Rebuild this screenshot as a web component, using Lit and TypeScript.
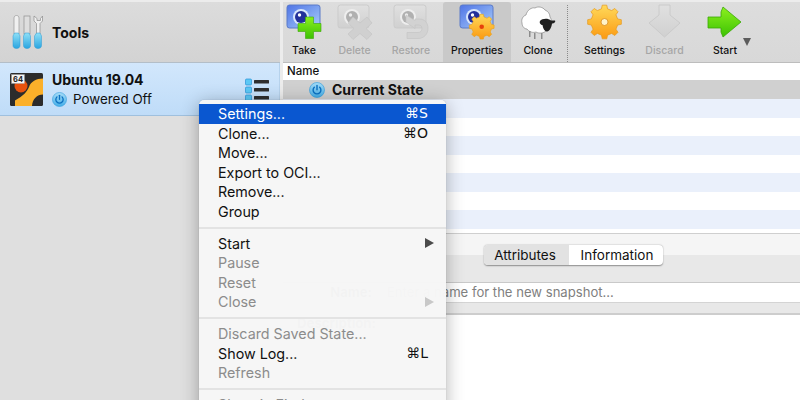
import { LitElement, html, css, svg } from "lit";
import { customElement } from "lit/decorators.js";

function gear(cx: number, cy: number, r: number, rb: number, teeth: number): string {
  const pts: string[] = [];
  const step = (Math.PI * 2) / teeth;
  for (let i = 0; i < teeth; i++) {
    const a = i * step - Math.PI / 2;
    const w = step * 0.17;
    const v = step * 0.29;
    const add = (ang: number, rad: number) =>
      pts.push(`${(cx + Math.cos(ang) * rad).toFixed(2)},${(cy + Math.sin(ang) * rad).toFixed(2)}`);
    add(a - v, rb);
    add(a - w, r);
    add(a + w, r);
    add(a + v, rb);
  }
  return "M" + pts.join("L") + "Z";
}

const defs = svg`
  <defs>
    <linearGradient id="blue" x1="0" y1="0" x2="1" y2="1"><stop offset="0" stop-color="#4f74e6"/><stop offset="1" stop-color="#a8cdfa"/></linearGradient>
    <linearGradient id="grey" x1="0" y1="0" x2="0" y2="1"><stop offset="0" stop-color="#e0e0e0"/><stop offset="1" stop-color="#d0d0d0"/></linearGradient>
    <linearGradient id="green" x1="0" y1="0" x2="0" y2="1"><stop offset="0" stop-color="#8cf01e"/><stop offset="1" stop-color="#3cc203"/></linearGradient>
    <linearGradient id="gold" x1="0" y1="0" x2="0" y2="1"><stop offset="0" stop-color="#ffd95a"/><stop offset="1" stop-color="#fb9a12"/></linearGradient>
    <linearGradient id="handle" x1="0" y1="0" x2="0" y2="1"><stop offset="0" stop-color="#8fe0f7"/><stop offset="1" stop-color="#2aa5e0"/></linearGradient>
    <linearGradient id="pow" x1="0" y1="0" x2="0" y2="1"><stop offset="0" stop-color="#a7dcf7"/><stop offset="1" stop-color="#43aee8"/></linearGradient>
  </defs>`;

const lens = (fill: string, ring: string, dot: string) => svg`
  <circle cx="15" cy="13" r="8" fill="${ring}"/>
  <circle cx="15" cy="13" r="6" fill="${fill}"/>
  <circle cx="13.500" cy="11" r="1.700" fill="${dot}"/>`;

const takeIcon = svg`
  <rect x="1" y="1" width="33" height="23" rx="2.500" fill="url(#blue)" stroke="#5a7ac8"/>
  ${lens("#22309a", "#d8e6fb", "#ffffff")}
  <path d="M19.500 13h8v6.500h7.500v8h-7.500v7h-8v-7h-7.500v-8h7.500z" fill="url(#green)" stroke="#3aa806" stroke-width=".6"/>`;

const deleteIcon = svg`
  <rect x="1" y="1" width="31" height="23" rx="2.500" fill="url(#grey)" stroke="#cbcbcb"/>
  ${lens("#b0b0b0", "#eeeeee", "#ececec")}
  <path d="M11 19l5-6 7 6 7-6 5 6-6 5.500 6 5.500-5 5.500-7-6-7 6-5-5.500 6-5.500z" fill="#d0d0d0" stroke="#c2c2c2" stroke-width=".6"/>`;

const restoreIcon = svg`
  <rect x="1" y="1" width="32" height="23" rx="2.500" fill="url(#grey)" stroke="#cbcbcb"/>
  ${lens("#b0b0b0", "#eeeeee", "#ececec")}
  <path d="M13 11l9 5.500v-1.500h4c6 0 9 4 9 9.500s-4 10-10 10H14v-6h11c2.500 0 4-1.500 4-4s-1.500-3.500-3.500-3.500H22v3.500l-9-6.500z" fill="#d2d2d2" stroke="#c2c2c2" stroke-width=".6"/>`;

const propsIcon = svg`
  <rect x="1" y="1" width="33" height="23" rx="2.500" fill="url(#blue)" stroke="#5a7ac8"/>
  ${lens("#22309a", "#d8e6fb", "#ffffff")}
  <path d="${gear(22.700, 22.700, 12.500, 10, 8)}" fill="url(#gold)" stroke="#e8a018" stroke-width=".6" stroke-linejoin="round"/>
  <circle cx="22.700" cy="22.700" r="2.300" fill="#e6400c"/>`;

const cloneIcon = svg`
  <path d="M6 11c-3 1-5 4-4 8 0 3 2 6 5 6 2 3 6 4 9 3 3 2 8 1 10-1 2 0 4-2 4-5 2-3 2-6 0-9 0-3-2-6-5-7-2-3-7-4-10-2-3-1-8 2-9 7z" fill="#fff" stroke="#8a8a8a" stroke-width=".7"/>
  <rect x="9" y="27" width="1.500" height="6" fill="#8c8c8c"/><rect x="14" y="29" width="1.500" height="6" fill="#8c8c8c"/><rect x="21" y="29" width="1.500" height="6" fill="#8c8c8c"/>
  <path d="M20 17c2-2.500 8-3 11-0.500l4 0c1 1.500-1 3-3 3-0.500 4-2.500 8-5 8-2.500 0-4-3-4.500-6.500-1.500 0-3.500-2-2.500-4z" fill="#1f1f1f"/>`;

const settingsIcon = svg`
  <path d="${gear(17.500, 18, 17, 13.500, 8)}" fill="url(#gold)" stroke="#e59a1c" stroke-width=".7" stroke-linejoin="round"/>
  <circle cx="17.500" cy="18" r="3.500" fill="#fff3c8" stroke="#d88a1a" stroke-width=".8"/>`;

const discardIcon = svg`
  <path d="M12 1h11v10l10 8-15.500 14L2 19l10-8z" fill="url(#grey)" stroke="#c6c6c6" stroke-width=".8" stroke-linejoin="round"/>`;

const startIcon = svg`
  <path d="M1 13h13V8l2-5 18 15-18 15-2-5v-4H1z" fill="url(#green)" stroke="#3aa806" stroke-width=".8" stroke-linejoin="round"/>`;

const tools = [
  { label: "Take", cls: "b-take", icon: takeIcon },
  { label: "Delete", cls: "b-delete off", icon: deleteIcon },
  { label: "Restore", cls: "b-restore off", icon: restoreIcon },
  { label: "Properties", cls: "b-props on", icon: propsIcon },
  { label: "Clone", cls: "b-clone", icon: cloneIcon },
  { sep: true },
  { label: "Settings", cls: "b-settings", icon: settingsIcon },
  { label: "Discard", cls: "b-discard off", icon: discardIcon },
  { label: "Start", cls: "b-start", icon: startIcon },
] as any[];

const menuGroups = [
  [
    { t: "Settings...", k: "⌘S", hi: true },
    { t: "Clone...", k: "⌘O" },
    { t: "Move..." },
    { t: "Export to OCI..." },
    { t: "Remove..." },
    { t: "Group" },
  ],
  [
    { t: "Start", sub: true },
    { t: "Pause", off: true },
    { t: "Reset", off: true },
    { t: "Close", off: true, sub: true },
  ],
  [
    { t: "Discard Saved State...", off: true },
    { t: "Show Log...", k: "⌘L" },
    { t: "Refresh", off: true },
  ],
  [{ t: "Show in Finder", off: true }],
] as any[][];

const power = (size: number) => html`<svg class="power" width="${size}" height="${size}" viewBox="0 0 16 16">
  <circle cx="8" cy="8" r="7.500" fill="url(#pow)" stroke="#2e9bdc" stroke-width=".6"/>
  <path d="M5.300 5.200a3.900 3.900 0 1 0 5.400 0" fill="none" stroke="#0a6fc0" stroke-width="1.400" stroke-linecap="round"/>
  <path d="M8 3.500v4.300" stroke="#0a6fc0" stroke-width="1.400" stroke-linecap="round"/>
</svg>`;

@customElement("app-root")
export class AppRoot extends LitElement {
  static styles = css`
    :host {
      display: block;
      position: relative;
      width: 800px;
      height: 400px;
      overflow: hidden;
      background: #ececec;
      font-family: Inter, "Liberation Sans", "DejaVu Sans", sans-serif;
      color: #111;
    }
    .defs { position: absolute; width: 0; height: 0; }
    .app { display: grid; grid-template-columns: 280px 3px 517px; height: 400px; padding-top: 2px; box-sizing: border-box; }
    .side { display: flex; flex-direction: column; background: #dfdfdf; }
    .tools {
      height: 61px; flex: none; box-sizing: border-box; display: flex; align-items: center; gap: 9px;
      padding-left: 12px; background: linear-gradient(#dcdcdc, #d3d3d3); border-bottom: 1px solid #b3bec8;
      font-size: 14px; font-weight: 700;
    }
    .vm {
      height: 53px; flex: none; box-sizing: border-box; display: flex; align-items: center;
      padding: 0 9px 0 10px; background: linear-gradient(#d2e7fc, #bfdcf8);
      border-bottom: 1px solid #9fc0de; border-right: 1px solid #b6d2ec;
    }
    .vm-icon { flex: none; margin-right: 9px; }
    .vm-text { flex: 1; display: flex; flex-direction: column; gap: 3px; }
    .vm-name { font-size: 14px; font-weight: 700; line-height: 17px; }
    .vm-state { display: flex; align-items: center; gap: 6px; font-size: 13.400px; line-height: 17px; }
    .list-icon { flex: none; margin-top: 1px; }
    .gutter { background: #ececec; }
    .main { display: flex; flex-direction: column; min-width: 0; }
    .toolbar {
      height: 61px; flex: none; box-sizing: border-box; display: flex; background: linear-gradient(#dddddd, #d8d8d8);
      border-bottom: 1px solid #bdbdbd; position: relative;
    }
    .tb { display: flex; flex-direction: column; align-items: center; box-sizing: border-box; padding-top: 2px; font-size: 10.500px; font-weight: 500; color: #111; }
    .tb svg { display: block; height: 36px; width: 36px; overflow: visible; }
    .tb span { margin-top: 4px; line-height: 14px; white-space: nowrap; }
    .tb.off span { color: #a6a6a6; }
    .tb.on { background: #c9c9c9; border-radius: 3px 3px 0 0; }
    .b-take { width: 42px; }
    .b-delete { width: 59px; }
    .b-restore { width: 54px; margin-right: 5px; }
    .b-props { width: 68px; }
    .b-clone { width: 54px; }
    .sep { width: 0; border-left: 1px dotted #8a8a8a; margin: 3px 2px 0 2px; height: 57px; }
    .b-settings { width: 69px; }
    .b-discard { width: 51px; }
    .b-start { width: 70px; }
    .caret { width: 0; height: 0; border-left: 4px solid transparent; border-right: 4px solid transparent; border-top: 8px solid #5c5c5c; margin: 36px 0 0 -17px; }
    .thead { height: 17px; flex: none; background: #fff; font-size: 11.500px; line-height: 17px; padding-left: 4px; font-weight: 500; }
    .current { height: 19px; flex: none; background: #d0d0d0; display: flex; align-items: center; gap: 7px; padding-left: 26px; font-size: 14px; font-weight: 700; }
    .rows { flex: none; height: 134px; overflow: hidden; background: #fff; }
    .row { height: 18.500px; }
    .row:nth-child(odd) { background: #eaf0fb; }
    .details { flex: 1; display: flex; flex-direction: column; border-top: 1px solid #cfcfcf; background: #f5f5f5; position: relative; }
    .tabwrap { height: 21px; flex: none; }
    .tabband { height: 27px; flex: none; background: #e8e8e8; position: relative; }
    .tabs {
      position: absolute; top: -10px; left: 201px; display: flex; height: 20px; border-radius: 4px; overflow: hidden;
      font-size: 13.500px; line-height: 20px; box-shadow: 0 0.500px 1.500px rgba(0,0,0,.4); background: #fff;
    }
    .tab { box-sizing: border-box; text-align: center; }
    .tab.a { width: 85px; background: #e2e2e2; padding-right: 3px; }
    .tab.b { width: 94px; padding-left: 2px; }
    .form-input {
      height: 21px; flex: none; box-sizing: border-box; background: #fff; border-top: 1px solid #c9c9c9; border-bottom: 1px solid #d4d4d4;
      font-size: 13.100px; line-height: 19px; color: #808080; display: flex;
    }
    .lbl { width: 89px; text-align: right; font-weight: 700; color: #333; margin-right: 15px; }
    .ph { white-space: nowrap; }
    .formgap { height: 10px; flex: none; background: #e8e8e8; border-bottom: 2px solid #cdcdcd; }
    .desc { flex: 1; background: #fff; font-size: 13.200px; line-height: 16px; font-weight: 700; color: #444; padding: 0 0 0 14px; }
    .menu {
      position: absolute; left: 199px; top: 100px; width: 247px; height: 320px; box-sizing: border-box; padding: 4px 0;
      background: rgba(246,246,246,.985); border-radius: 5px 5px 0 0;
      box-shadow: 0 3px 18px rgba(0,0,0,.3), 0 0 1px rgba(0,0,0,.3);
      font-size: 14.300px; color: #111;
    }
    .item { height: 19.600px; line-height: 19.600px; display: flex; align-items: center; padding: 0 18px 0 19px; white-space: nowrap; }
    .item .t { flex: 1; }
    .item .k { font-family: "DejaVu Sans", Inter, sans-serif; font-size: 14px; }
    .item.hi { background: #0a57d0; color: #fff; }
    .item.off { color: #8c8c8c; }
    .arrow { width: 0; height: 0; border-top: 5px solid transparent; border-bottom: 5px solid transparent; border-left: 9px solid #4b4b4b; margin-right: -6px; }
    .item.off .arrow { border-left-color: #c8c8c8; }
    .msep { height: 2px; margin: 5px 0; background: #e3e3e3; }
    .msep.tail { margin-bottom: 5.500px; }
  `;

  render() {
    return html`
      <svg class="defs">${defs}</svg>
      <div class="app">
        <div class="side">
          <div class="tools">
            <svg width="31" height="34" viewBox="0 0 31 34">
              <path d="M2 3c0-1.500 1-2.500 2.500-2.500S7 1.500 7 3v16H2z" fill="#f0f0f0" stroke="#9a9a9a" stroke-width=".7"/>
              <rect x="12" y="1" width="6" height="18" fill="#dedede" stroke="#8f8f8f" stroke-width=".7"/>
              <path d="M22 1v5l2.500 2.500V19h3.500V8.500L30.500 6V1l-2 2.500v2h-3.500v-2z" fill="#f0f0f0" stroke="#8c8c8c" stroke-width=".7"/>
              <path d="M2.500 18h4l1.500 3v9.500c0 2-1.500 3-3.500 3s-3.500-1-3.500-3V21z" fill="url(#handle)" stroke="#2c9bd4" stroke-width=".5"/>
              <path d="M13 18h4l1.500 3v9.500c0 2-1.500 3-3.500 3s-3.500-1-3.500-3V21z" fill="url(#handle)" stroke="#2c9bd4" stroke-width=".5"/>
              <path d="M24.500 18h3.500l1.500 3v9.500c0 2-1.500 3-3.500 3s-3.500-1-3.500-3V21z" fill="url(#handle)" stroke="#2c9bd4" stroke-width=".5"/>
            </svg>
            <span>Tools</span>
          </div>
          <div class="vm">
            <svg class="vm-icon" width="33" height="33" viewBox="0 0 33 33">
              <rect width="33" height="33" rx="1.500" fill="#2c2c2c"/>
              <path d="M33 5.500C26 5.500 21 8.500 19 14c-2 5-6 9-14 13.500V33h17c.5-7 5-11.500 11-11.500z" fill="#fbb02a"/>
              <circle cx="11" cy="13" r="6.500" fill="#e8520e"/>
              <rect x="1.500" y="1.500" width="13" height="9" fill="#f4f4f4" stroke="#999" stroke-width=".4"/>
              <text x="8" y="8.600" font-size="7.500" font-weight="700" text-anchor="middle" fill="#222" font-family="Inter, sans-serif">64</text>
            </svg>
            <div class="vm-text">
              <div class="vm-name">Ubuntu 19.04</div>
              <div class="vm-state">${power(15)}<span>Powered Off</span></div>
            </div>
            <svg class="list-icon" width="25" height="24" viewBox="0 0 25 24">
              ${[1, 9, 17].map(
                (y) => svg`
                <rect x="0.500" y="${y}" width="6" height="6" rx="1" fill="#5cc8f5" stroke="#2a94d8" stroke-width=".7"/>
                <rect x="9" y="${y + 1}" width="15" height="3.500" rx=".5" fill="#2e2e2e"/>`
              )}
            </svg>
          </div>
        </div>
        <div class="gutter"></div>
        <div class="main">
          <div class="toolbar">
            ${tools.map((b) =>
              b.sep
                ? html`<div class="sep"></div>`
                : html`<div class="tb ${b.cls}"><svg viewBox="0 0 36 36">${b.icon}</svg><span>${b.label}</span></div>`
            )}
            <div class="caret"></div>
          </div>
          <div class="thead">Name</div>
          <div class="current">${power(16)}<span>Current State</span></div>
          <div class="rows">${Array.from({ length: 8 }, () => html`<div class="row"></div>`)}</div>
          <div class="details">
            <div class="tabwrap"></div>
            <div class="tabband">
              <div class="tabs"><div class="tab a">Attributes</div><div class="tab b">Information</div></div>
            </div>
            <div class="form-input"><span class="lbl">Name:</span><span class="ph">Enter a name for the new snapshot...</span></div>
            <div class="formgap"></div>
            <div class="desc">Description:</div>
          </div>
        </div>
      </div>
      <div class="menu">
        ${menuGroups.map(
          (g, i) => html`
            ${i ? html`<div class="msep ${i === menuGroups.length - 1 ? "tail" : ""}"></div>` : ""}
            ${g.map(
              (it) => html`<div class="item ${it.hi ? "hi" : ""} ${it.off ? "off" : ""}">
                <span class="t">${it.t}</span>
                ${it.k ? html`<span class="k">${it.k}</span>` : ""}
                ${it.sub ? html`<span class="arrow"></span>` : ""}
              </div>`
            )}
          `
        )}
      </div>
    `;
  }
}
